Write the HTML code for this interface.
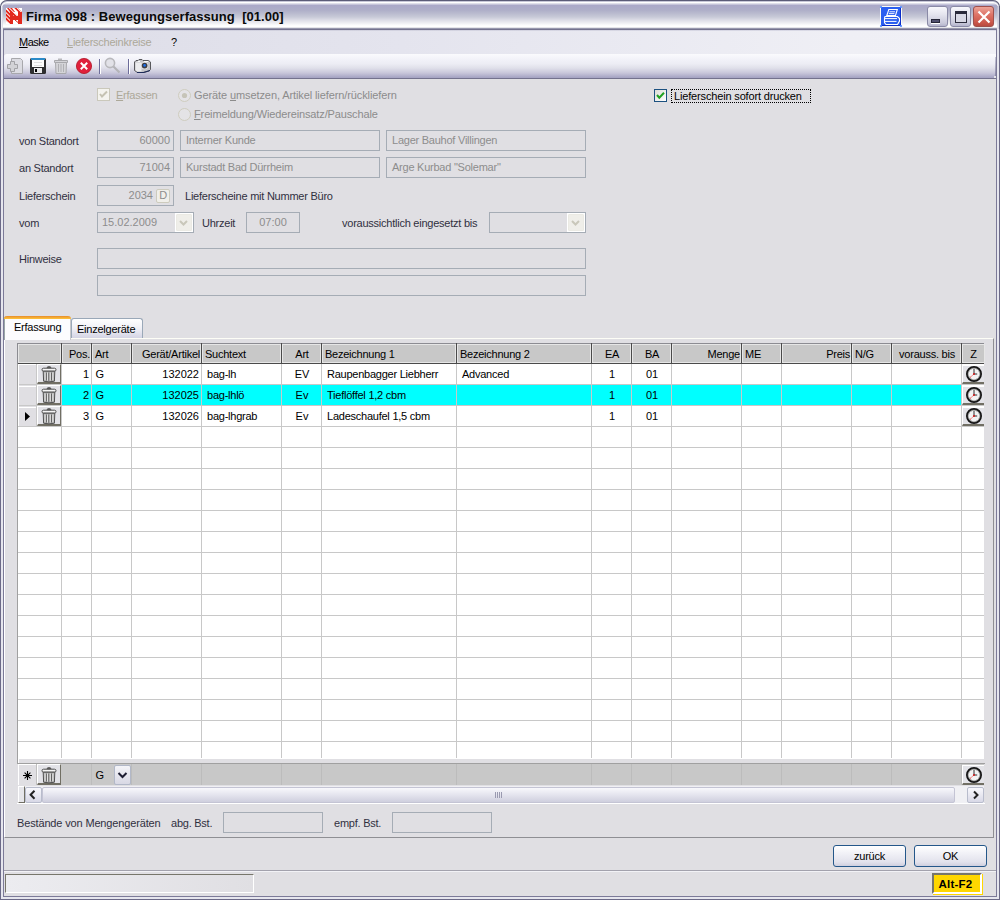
<!DOCTYPE html>
<html><head><meta charset="utf-8">
<style>
*{margin:0;padding:0;box-sizing:border-box}
html,body{width:1000px;height:900px;overflow:hidden;background:#fff}
body{font-family:"Liberation Sans",sans-serif;font-size:11px;color:#000;position:relative}
.a{position:absolute}
.t{position:absolute;white-space:nowrap;line-height:13px;letter-spacing:-0.24px}
.dis{color:#aca899}
.gry{color:#8d8d8d}
.box{position:absolute;border:1px solid #a5acb5;background:#e0dfe3}
.ul{text-decoration:underline;text-underline-offset:1px}
svg{position:absolute;overflow:visible}
</style></head><body>

<div class="a" style="left:0px;top:0px;width:1000px;height:900px;border-radius:7px 7px 0 0;background:#e0dfe3"></div>
<div class="a" style="left:0px;top:24px;width:1px;height:876px;background:#6c6a88"></div>
<div class="a" style="left:999px;top:24px;width:1px;height:876px;background:#6c6a88"></div>
<div class="a" style="left:1px;top:24px;width:2px;height:875px;background:#e6e6ee"></div>
<div class="a" style="left:997px;top:24px;width:2px;height:875px;background:#e6e6ee"></div>
<div class="a" style="left:3px;top:29px;width:1px;height:868px;background:#7c7a98"></div>
<div class="a" style="left:996px;top:29px;width:1px;height:868px;background:#7c7a98"></div>
<div class="a" style="left:0px;top:899px;width:1000px;height:1px;background:#6c6a88"></div>
<div class="a" style="left:1px;top:897px;width:998px;height:2px;background:#e6e6ee"></div>
<div class="a" style="left:3px;top:896px;width:994px;height:1px;background:#7c7a98"></div>
<div class="a" style="left:0px;top:0px;width:1000px;height:29px;border-radius:7px 7px 0 0;background:#5c5c78"></div>
<div class="a" style="left:1px;top:1px;width:998px;height:28px;border-radius:6px 6px 0 0;background:#c8c8d8"></div>
<div class="a" style="left:1px;top:2px;width:998px;height:27px;border-radius:6px 6px 0 0;background:#ffffff"></div>
<div class="a" style="left:2px;top:3px;width:996px;height:26px;border-radius:5px 5px 0 0;background:linear-gradient(#e0e0ea 0px,#e0e0ea 1px,#c6c4da 1px,#c6c4da 2px,#aaa8c8 2px,#aeaec8 7px,#bcbdd0 11px,#c8cad8 14px,#dcdce6 17px,#eeeef2 20px,#fbfbfc 22px,#ffffff 23px,#ffffff 24px,#e6e6ea 24px,#e6e6ea 25px,#9898ae 25px,#9898ae 26px)"></div>
<div class="a" style="left:0px;top:6px;width:1px;height:23px;background:#5c5c78"></div>
<div class="a" style="left:999px;top:6px;width:1px;height:23px;background:#5c5c78"></div>
<div class="a" style="left:1px;top:6px;width:1px;height:23px;background:#f0f0f6"></div>
<div class="a" style="left:998px;top:6px;width:1px;height:23px;background:#d0d0de"></div>
<div class="a" style="left:2px;top:6px;width:1px;height:23px;background:linear-gradient(#c8c8d8,#e6e6ee)"></div>
<div class="a" style="left:997px;top:6px;width:1px;height:23px;background:linear-gradient(#b8b8cc,#e0e0ea)"></div>
<div class="t" style="left:26px;top:9px;font-size:13px;font-weight:bold;line-height:16px;letter-spacing:0.05px;color:#0a0a0a">Firma 098 : Bewegungserfassung&nbsp; [01.00]</div>
<svg style="left:6px;top:8px" width="16" height="16" viewBox="0 0 16 16">
<defs><pattern id="hx" width="2.8" height="2.8" patternUnits="userSpaceOnUse" patternTransform="rotate(-45)"><rect width="1.9" height="2.8" fill="#e4261c"/></pattern></defs>
<rect x="0" y="0" width="16" height="16" fill="#fff"/>
<path d="M0 1 L4 4 V16 L0 13 Z" fill="url(#hx)"/>
<path d="M1 0 H6 L9 4 H4 Z" fill="url(#hx)"/>
<path d="M8 0 H12 L16 4 H12 Z" fill="url(#hx)"/>
<path d="M7 4 L12 8 H7 Z" fill="url(#hx)"/>
<path d="M4 4 H7 V8 H12 V4 H16 V16 H12 V12 H7 V16 H4 Z" fill="#e2291e"/>
<path d="M9 12 L12 14.5" stroke="#e2291e" stroke-width="1"/>
</svg>
<svg style="left:880px;top:6px" width="22" height="21" viewBox="0 0 22 21">
<rect x="0.5" y="0.5" width="21" height="20" fill="#2b5ff0" stroke="#fbfbf4" stroke-width="1"/>
<path d="M20.5 1.5 V19.5 H1.5" fill="none" stroke="#0a2cc8" stroke-width="1"/>
<circle cx="1" cy="1" r="1.1" fill="#4f86ff"/><circle cx="21" cy="1" r="1.1" fill="#4f86ff"/><circle cx="1" cy="20" r="1.1" fill="#4f86ff"/><circle cx="21" cy="20" r="1.1" fill="#4f86ff"/>
<path d="M8.8 3.5 H17.3 L15.5 9.5 H6.8 Z" fill="none" stroke="#fff" stroke-width="1.1"/>
<path d="M9.5 5.8 H15 M8.8 7.6 H14.4" stroke="#fff" stroke-width="0.9"/>
<path d="M5 10.5 H17.5 L19.5 12.5 V15 L17.5 18.5 H6 L4.5 16.5 V12 Z" fill="none" stroke="#fff" stroke-width="1.1"/>
<path d="M5 12.6 H17 M5 15.4 H16.5" stroke="#fff" stroke-width="1"/>
</svg>
<div class="a" style="left:927px;top:6px;width:21px;height:21px;border:1px solid #8a8aa6;border-radius:3px;background:linear-gradient(#f8f8fc,#e4e4ee 40%,#c8c8da 85%,#b4b4cc)"><div class="a" style="left:3px;top:12px;width:9px;height:4px;background:#50506e;border:1px solid #262638;box-shadow:0 1px 0 #fff"></div></div>
<div class="a" style="left:950px;top:6px;width:21px;height:21px;border:1px solid #8a8aa6;border-radius:3px;background:linear-gradient(#f8f8fc,#e4e4ee 40%,#c8c8da 85%,#b4b4cc)"><div class="a" style="left:4px;top:4px;width:12px;height:12px;border:1px solid #2a2a3a;border-top-width:3px;background:#d8d8e4"></div></div>
<div class="a" style="left:973px;top:6px;width:21px;height:21px;border:1px solid #a0504c;border-radius:3px;background:linear-gradient(#eca498,#de7468 40%,#c85448 85%,#b84a40)"><svg style="left:3px;top:3px" width="14" height="14"><path d="M1.5 1.5 L12.5 12.5 M12.5 1.5 L1.5 12.5" stroke="#fff" stroke-width="2.2"/></svg></div>
<div class="a" style="left:4px;top:29px;width:992px;height:1px;background:#74728e"></div>
<div class="a" style="left:4px;top:30px;width:992px;height:1px;background:linear-gradient(90deg,#cdcddb,#dcdce8)"></div>
<div class="a" style="left:4px;top:31px;width:992px;height:23px;background:linear-gradient(90deg,#dddde7,#e4e4ee 40%,#efeff5 85%,#f0f0f6)"></div>
<div class="t" style="left:19px;top:36px;letter-spacing:-0.55px"><span class="ul">M</span>aske</div>
<div class="t" style="left:67px;top:36px;color:#aca899"><span class="ul">L</span>ieferscheinkreise</div>
<div class="t" style="left:171px;top:36px;">?</div>
<div class="a" style="left:4px;top:54px;width:992px;height:24px;border-radius:3px 0 0 0;background:linear-gradient(#fafafd 0px,#f4f4fa 4px,#ececf4 10px,#e0e0ea 14px,#c8c6da 19px,#aaa8c6 23px,#a4a2c2 24px)"></div>
<div class="a" style="left:4px;top:78px;width:992px;height:1px;background:#74728e"></div>
<div class="a" style="left:995px;top:57px;width:1px;height:20px;background:linear-gradient(#c8c8d8,#8886a6)"></div>
<div class="a" style="left:994px;top:76px;width:2px;height:2px;background:#e3e3ea"></div>
<svg style="left:4px;top:55px" width="160" height="22" viewBox="4 55 160 22">
<!-- new doc disabled -->
<path d="M11.5 58.5 H20.5 L22.5 60.5 V73.5 H11.5 Z" fill="#dcdce2" stroke="#a8a8ac" stroke-width="1"/>
<path d="M10.5 61.5 H14.5 V64.5 H17.5 V68.5 H14.5 V71.5 H10.5 V68.5 H7.5 V64.5 H10.5 Z" fill="#d2d2d6" stroke="#a2a2a6" stroke-width="1"/>
<!-- save -->
<rect x="30" y="58" width="16" height="16" rx="1.5" fill="#2e2e30"/>
<rect x="31" y="58" width="14" height="2" fill="#2a8ac8"/>
<rect x="32" y="60" width="12" height="7" fill="#fbfbfb"/>
<path d="M34 62.5 H42 M34 65.5 H42" stroke="#d8d8d8" stroke-width="0.8"/>
<rect x="34" y="68" width="8" height="5" fill="#e8e8ea"/>
<rect x="35" y="69" width="2" height="3" fill="#000"/>
<!-- trash disabled -->
<path d="M58 58.5 H62 V60 H58 Z" fill="#b8b8bc"/>
<path d="M54.5 60.5 H67.5 V62.5 H54.5 Z" fill="#d4d4d8" stroke="#a8a8ac"/>
<path d="M55.5 62.5 H66.5 L66 73.5 H56 Z" fill="#d4d4d8" stroke="#a8a8ac"/>
<path d="M58.5 64 V72 M61 64 V72 M63.5 64 V72" stroke="#b0b0b4" stroke-width="1"/>
<!-- red x -->
<circle cx="84" cy="66" r="7.6" fill="#e0203c" stroke="#b01424" stroke-width="0.8"/>
<path d="M80.8 62.8 L87.2 69.2 M87.2 62.8 L80.8 69.2" stroke="#fff" stroke-width="2"/>
<!-- sep -->
<rect x="99" y="59" width="1" height="15" fill="#6c6c9a"/>
<rect x="100" y="59" width="1" height="15" fill="#fff"/>
<!-- magnifier disabled -->
<circle cx="110" cy="63" r="4.6" fill="#e2e2e8" stroke="#b8b8bc" stroke-width="1.6"/>
<path d="M113.5 66.5 L119.5 72.5" stroke="#b4b4b8" stroke-width="2.2"/>
<rect x="128" y="59" width="1" height="15" fill="#6c6c9a"/>
<rect x="129" y="59" width="1" height="15" fill="#fff"/>
<!-- camera -->
<path d="M134.5 62 L136 60.5 H138 L139 59.5 H142 L143 60.5 H148.5 L150.5 62 V69.5 L149 71 L143.5 72.5 H137.5 L134.5 70.5 Z" fill="#c4c4c8" stroke="#58585c" stroke-width="1"/>
<path d="M135.5 62.5 H141.5 V71.5 H137 L135.5 70 Z" fill="#ececee"/>
<path d="M137.5 61.5 H140 M144 61.5 H148" stroke="#fafafa" stroke-width="1"/>
<circle cx="144.6" cy="65.6" r="3.6" fill="#e8e8ea"/>
<circle cx="144.6" cy="65.6" r="2.9" fill="#3e3e42"/>
<circle cx="144.6" cy="65.4" r="1.3" fill="#1c70f0"/>
<path d="M137 72.5 H143.5 L150 70.5" fill="none" stroke="#1e2c5a" stroke-width="1.2"/>
</svg>
<div class="a" style="left:97px;top:88px;width:13px;height:13px;border:1px solid #cac8bb;background:#f4f3ee"></div>
<svg style="left:97px;top:88px" width="13" height="13"><path d="M3 6 L5 8.5 L10 3.5" fill="none" stroke="#c5c2b2" stroke-width="2"/></svg>
<div class="t" style="left:116px;top:89px;color:#aca899"><span class="ul">E</span>rfassen</div>
<svg style="left:178px;top:89.0px" width="13" height="13"><circle cx="6.5" cy="6.5" r="6" fill="#e4e3e6" stroke="#cfcdbf" stroke-width="1"/></svg>
<svg style="left:178px;top:108.0px" width="13" height="13"><circle cx="6.5" cy="6.5" r="6" fill="#e4e3e6" stroke="#cfcdbf" stroke-width="1"/></svg>
<svg style="left:178px;top:89px" width="13" height="13"><circle cx="6.5" cy="6.5" r="2.6" fill="#c6c4b8"/></svg>
<div class="t" style="left:194px;top:89px;color:#8c8c8c;letter-spacing:-0.1px">Geräte <span class="ul">u</span>msetzen, Artikel liefern/rückliefern</div>
<div class="t" style="left:194px;top:108px;color:#8c8c8c;letter-spacing:-0.13px"><span class="ul">F</span>reimeldung/Wiedereinsatz/Pauschale</div>
<div class="a" style="left:654px;top:89px;width:13px;height:13px;border:1px solid #1c5180;background:linear-gradient(135deg,#dcdcd7,#fff)"></div>
<svg style="left:654px;top:89px" width="13" height="13"><path d="M3 6 L5.3 8.7 L10 3.8" fill="none" stroke="#21a121" stroke-width="2"/></svg>
<div class="a" style="left:671px;top:89px;width:140px;height:14px;border:1px dotted #000"></div>
<div class="t" style="left:674px;top:90px;letter-spacing:-0.16px">Lieferschein sofort drucken</div>
<div class="t" style="left:19px;top:135px;color:#30303f">von Standort</div>
<div class="t" style="left:19px;top:162px;color:#30303f">an Standort</div>
<div class="t" style="left:19px;top:190px;color:#30303f">Lieferschein</div>
<div class="t" style="left:19px;top:217px;color:#30303f">vom</div>
<div class="t" style="left:19px;top:253px;color:#30303f">Hinweise</div>
<div class="a" style="left:97px;top:130px;width:77px;height:21px;border:1px solid #a5acb5;background:#e0dfe3"></div>
<div class="t" style="left:97px;top:134px;color:#8d8d8d;letter-spacing:0;width:73px;text-align:right">60000</div>
<div class="a" style="left:180px;top:130px;width:200px;height:21px;border:1px solid #a5acb5;background:#e0dfe3"></div>
<div class="t" style="left:186px;top:134px;color:#8d8d8d">Interner Kunde</div>
<div class="a" style="left:386px;top:130px;width:200px;height:21px;border:1px solid #a5acb5;background:#e0dfe3"></div>
<div class="t" style="left:392px;top:134px;color:#8d8d8d">Lager Bauhof Villingen</div>
<div class="a" style="left:97px;top:157px;width:77px;height:21px;border:1px solid #a5acb5;background:#e0dfe3"></div>
<div class="t" style="left:97px;top:161px;color:#8d8d8d;letter-spacing:0;width:73px;text-align:right">71004</div>
<div class="a" style="left:180px;top:157px;width:200px;height:21px;border:1px solid #a5acb5;background:#e0dfe3"></div>
<div class="t" style="left:186px;top:161px;color:#8d8d8d">Kurstadt Bad Dürrheim</div>
<div class="a" style="left:386px;top:157px;width:200px;height:21px;border:1px solid #a5acb5;background:#e0dfe3"></div>
<div class="t" style="left:392px;top:161px;color:#8d8d8d">Arge Kurbad "Solemar"</div>
<div class="a" style="left:97px;top:185px;width:77px;height:21px;border:1px solid #a5acb5;background:#e0dfe3"></div>
<div class="t" style="left:97px;top:189px;color:#8d8d8d;letter-spacing:0;width:56px;text-align:right">2034</div>
<div class="a" style="left:156px;top:189px;width:14px;height:14px;border:1px solid #cdcbbd;border-radius:2px;background:#f0efea"></div>
<div class="t" style="left:156px;top:189px;color:#8d8d8d;width:14px;text-align:center">D</div>
<div class="t" style="left:185px;top:190px;color:#30303f">Lieferscheine mit Nummer Büro</div>
<div class="a" style="left:97px;top:212px;width:97px;height:21px;border:1px solid #a5acb5;background:#e0dfe3"></div>
<div class="t" style="left:102px;top:216px;color:#8d8d8d;letter-spacing:0">15.02.2009</div>
<div class="a" style="left:175px;top:213px;width:18px;height:19px;background:#fff"></div>
<div class="a" style="left:176px;top:214px;width:16px;height:17px;border:1px solid #ebeae4;border-radius:1px;background:#efeee9"></div>
<svg style="left:175px;top:214px" width="17" height="17"><path d="M5 7 L8.5 10.5 L12 7" fill="none" stroke="#c9c7ba" stroke-width="2"/></svg>
<div class="t" style="left:202px;top:217px;color:#30303f">Uhrzeit</div>
<div class="a" style="left:246px;top:212px;width:54px;height:21px;border:1px solid #a5acb5;background:#e0dfe3"></div>
<div class="t" style="left:246px;top:216px;color:#8d8d8d;letter-spacing:0;width:54px;text-align:center">07:00</div>
<div class="t" style="left:342px;top:217px;color:#30303f">voraussichtlich eingesetzt bis</div>
<div class="a" style="left:489px;top:212px;width:97px;height:21px;border:1px solid #a5acb5;background:#e0dfe3"></div>
<div class="a" style="left:567px;top:213px;width:18px;height:19px;background:#fff"></div>
<div class="a" style="left:568px;top:214px;width:16px;height:17px;border:1px solid #ebeae4;border-radius:1px;background:#efeee9"></div>
<svg style="left:567px;top:214px" width="17" height="17"><path d="M5 7 L8.5 10.5 L12 7" fill="none" stroke="#c9c7ba" stroke-width="2"/></svg>
<div class="a" style="left:97px;top:248px;width:489px;height:21px;border:1px solid #a5acb5;background:#e0dfe3"></div>
<div class="a" style="left:97px;top:275px;width:489px;height:21px;border:1px solid #a5acb5;background:#e0dfe3"></div>
<div class="a" style="left:4px;top:338px;width:990px;height:500px;background:#e0dfe3;border-top:1px solid #fdfdf6;border-left:1px solid #fff;border-right:1px solid #8f8f94;border-bottom:1px solid #8f8f94"></div>
<div class="a" style="left:71px;top:318px;width:72px;height:20px;border:1px solid #9aa8b8;border-bottom:none;border-radius:3px 3px 0 0;background:linear-gradient(#ffffff,#f0f0f6 50%,#d4d4e4)"></div>
<div class="t" style="left:77px;top:323px;">Einzelgeräte</div>
<div class="a" style="left:4px;top:316px;width:67px;height:24px;border-left:1px solid #9aa8a8;border-right:1px solid #c8c8cc;border-radius:3px 3px 0 0;background:#fcfcfe"></div>
<div class="a" style="left:4px;top:316px;width:67px;height:3px;border-radius:3px 3px 0 0;background:linear-gradient(#e68b2c,#ffc73c)"></div>
<div class="t" style="left:14px;top:321px;">Erfassung</div>
<div class="a" style="left:18px;top:343px;width:966px;height:21px;background:#c8c8c8"></div>
<div class="a" style="left:17px;top:343px;width:967px;height:1px;background:#8c8c92"></div>
<div class="a" style="left:17px;top:363px;width:967px;height:1px;background:#4a4a4a"></div>
<div class="a" style="left:18px;top:364px;width:966px;height:395px;background:#fff"></div>
<div class="a" style="left:18px;top:364px;width:43px;height:62px;background:#e0dfe3"></div>
<div class="a" style="left:18px;top:384px;width:966px;height:1px;background:#c8c8c8"></div>
<div class="a" style="left:18px;top:405px;width:966px;height:1px;background:#c8c8c8"></div>
<div class="a" style="left:18px;top:426px;width:966px;height:1px;background:#c8c8c8"></div>
<div class="a" style="left:18px;top:447px;width:966px;height:1px;background:#c8c8c8"></div>
<div class="a" style="left:18px;top:468px;width:966px;height:1px;background:#c8c8c8"></div>
<div class="a" style="left:18px;top:489px;width:966px;height:1px;background:#c8c8c8"></div>
<div class="a" style="left:18px;top:510px;width:966px;height:1px;background:#c8c8c8"></div>
<div class="a" style="left:18px;top:531px;width:966px;height:1px;background:#c8c8c8"></div>
<div class="a" style="left:18px;top:552px;width:966px;height:1px;background:#c8c8c8"></div>
<div class="a" style="left:18px;top:573px;width:966px;height:1px;background:#c8c8c8"></div>
<div class="a" style="left:18px;top:594px;width:966px;height:1px;background:#c8c8c8"></div>
<div class="a" style="left:18px;top:615px;width:966px;height:1px;background:#c8c8c8"></div>
<div class="a" style="left:18px;top:636px;width:966px;height:1px;background:#c8c8c8"></div>
<div class="a" style="left:18px;top:657px;width:966px;height:1px;background:#c8c8c8"></div>
<div class="a" style="left:18px;top:678px;width:966px;height:1px;background:#c8c8c8"></div>
<div class="a" style="left:18px;top:699px;width:966px;height:1px;background:#c8c8c8"></div>
<div class="a" style="left:18px;top:720px;width:966px;height:1px;background:#c8c8c8"></div>
<div class="a" style="left:18px;top:741px;width:966px;height:1px;background:#c8c8c8"></div>
<div class="a" style="left:62px;top:385px;width:899px;height:20px;background:#00ffff"></div>
<div class="a" style="left:61px;top:364px;width:1px;height:394px;background:#c8c8c8"></div>
<div class="a" style="left:91px;top:364px;width:1px;height:394px;background:#c8c8c8"></div>
<div class="a" style="left:131px;top:364px;width:1px;height:394px;background:#c8c8c8"></div>
<div class="a" style="left:201px;top:364px;width:1px;height:394px;background:#c8c8c8"></div>
<div class="a" style="left:281px;top:364px;width:1px;height:394px;background:#c8c8c8"></div>
<div class="a" style="left:321px;top:364px;width:1px;height:394px;background:#c8c8c8"></div>
<div class="a" style="left:456px;top:364px;width:1px;height:394px;background:#c8c8c8"></div>
<div class="a" style="left:591px;top:364px;width:1px;height:394px;background:#c8c8c8"></div>
<div class="a" style="left:631px;top:364px;width:1px;height:394px;background:#c8c8c8"></div>
<div class="a" style="left:671px;top:364px;width:1px;height:394px;background:#c8c8c8"></div>
<div class="a" style="left:741px;top:364px;width:1px;height:394px;background:#c8c8c8"></div>
<div class="a" style="left:781px;top:364px;width:1px;height:394px;background:#c8c8c8"></div>
<div class="a" style="left:851px;top:364px;width:1px;height:394px;background:#c8c8c8"></div>
<div class="a" style="left:891px;top:364px;width:1px;height:394px;background:#c8c8c8"></div>
<div class="a" style="left:961px;top:364px;width:1px;height:394px;background:#c8c8c8"></div>
<div class="a" style="left:36px;top:364px;width:1px;height:62px;background:#c8c8c8"></div>
<div class="a" style="left:18px;top:364px;width:18px;height:1px;background:#fff"></div>
<div class="a" style="left:18px;top:386px;width:18px;height:1px;background:#fff"></div>
<div class="a" style="left:18px;top:407px;width:18px;height:1px;background:#fff"></div>
<div class="a" style="left:18px;top:364px;width:1px;height:62px;background:#fff"></div>
<div class="a" style="left:18px;top:344px;width:43px;height:19px;border:1px solid #e6e6e6"></div>
<div class="a" style="left:62px;top:344px;width:29px;height:19px;border:1px solid #e6e6e6"></div>
<div class="a" style="left:92px;top:344px;width:39px;height:19px;border:1px solid #e6e6e6"></div>
<div class="a" style="left:132px;top:344px;width:69px;height:19px;border:1px solid #e6e6e6"></div>
<div class="a" style="left:202px;top:344px;width:79px;height:19px;border:1px solid #e6e6e6"></div>
<div class="a" style="left:282px;top:344px;width:39px;height:19px;border:1px solid #e6e6e6"></div>
<div class="a" style="left:322px;top:344px;width:134px;height:19px;border:1px solid #e6e6e6"></div>
<div class="a" style="left:457px;top:344px;width:134px;height:19px;border:1px solid #e6e6e6"></div>
<div class="a" style="left:592px;top:344px;width:39px;height:19px;border:1px solid #e6e6e6"></div>
<div class="a" style="left:632px;top:344px;width:39px;height:19px;border:1px solid #e6e6e6"></div>
<div class="a" style="left:672px;top:344px;width:69px;height:19px;border:1px solid #e6e6e6"></div>
<div class="a" style="left:742px;top:344px;width:39px;height:19px;border:1px solid #e6e6e6"></div>
<div class="a" style="left:782px;top:344px;width:69px;height:19px;border:1px solid #e6e6e6"></div>
<div class="a" style="left:852px;top:344px;width:39px;height:19px;border:1px solid #e6e6e6"></div>
<div class="a" style="left:892px;top:344px;width:69px;height:19px;border:1px solid #e6e6e6"></div>
<div class="a" style="left:962px;top:344px;width:23px;height:19px;border:1px solid #e6e6e6"></div>
<div class="a" style="left:61px;top:343px;width:1px;height:21px;background:#4a4a4a"></div>
<div class="a" style="left:91px;top:343px;width:1px;height:21px;background:#4a4a4a"></div>
<div class="a" style="left:131px;top:343px;width:1px;height:21px;background:#4a4a4a"></div>
<div class="a" style="left:201px;top:343px;width:1px;height:21px;background:#4a4a4a"></div>
<div class="a" style="left:281px;top:343px;width:1px;height:21px;background:#4a4a4a"></div>
<div class="a" style="left:321px;top:343px;width:1px;height:21px;background:#4a4a4a"></div>
<div class="a" style="left:456px;top:343px;width:1px;height:21px;background:#4a4a4a"></div>
<div class="a" style="left:591px;top:343px;width:1px;height:21px;background:#4a4a4a"></div>
<div class="a" style="left:631px;top:343px;width:1px;height:21px;background:#4a4a4a"></div>
<div class="a" style="left:671px;top:343px;width:1px;height:21px;background:#4a4a4a"></div>
<div class="a" style="left:741px;top:343px;width:1px;height:21px;background:#4a4a4a"></div>
<div class="a" style="left:781px;top:343px;width:1px;height:21px;background:#4a4a4a"></div>
<div class="a" style="left:851px;top:343px;width:1px;height:21px;background:#4a4a4a"></div>
<div class="a" style="left:891px;top:343px;width:1px;height:21px;background:#4a4a4a"></div>
<div class="a" style="left:961px;top:343px;width:1px;height:21px;background:#4a4a4a"></div>
<div class="a" style="left:17px;top:343px;width:1px;height:21px;background:#8c8c92"></div>
<div class="a" style="left:17px;top:364px;width:1px;height:399px;background:#a0a0a0"></div>
<div class="t" style="left:62px;top:348px;width:28px;text-align:right">Pos.</div>
<div class="t" style="left:95px;top:348px;">Art</div>
<div class="t" style="left:132px;top:348px;width:68px;text-align:right">Gerät/Artikel</div>
<div class="t" style="left:205px;top:348px;">Suchtext</div>
<div class="t" style="left:282px;top:348px;width:40px;text-align:center">Art</div>
<div class="t" style="left:325px;top:348px;">Bezeichnung 1</div>
<div class="t" style="left:460px;top:348px;">Bezeichnung 2</div>
<div class="t" style="left:592px;top:348px;width:40px;text-align:center">EA</div>
<div class="t" style="left:632px;top:348px;width:40px;text-align:center">BA</div>
<div class="t" style="left:672px;top:348px;width:68px;text-align:right">Menge</div>
<div class="t" style="left:745px;top:348px;">ME</div>
<div class="t" style="left:782px;top:348px;width:68px;text-align:right">Preis</div>
<div class="t" style="left:855px;top:348px;">N/G</div>
<div class="t" style="left:892px;top:348px;width:70px;text-align:center">vorauss. bis</div>
<div class="t" style="left:962px;top:348px;width:23px;text-align:center">Z</div>
<div class="t" style="left:62px;top:368px;width:27px;text-align:right;letter-spacing:0">1</div>
<div class="t" style="left:95.5px;top:368px;">G</div>
<div class="t" style="left:132px;top:368px;width:67px;text-align:right;letter-spacing:0">132022</div>
<div class="t" style="left:207px;top:368px;">bag-lh</div>
<div class="t" style="left:282px;top:368px;width:40px;text-align:center;letter-spacing:0">EV</div>
<div class="t" style="left:327px;top:368px;">Raupenbagger Liebherr</div>
<div class="t" style="left:462px;top:368px;">Advanced</div>
<div class="t" style="left:592px;top:368px;width:40px;text-align:center;letter-spacing:0">1</div>
<div class="t" style="left:632px;top:368px;width:40px;text-align:center;letter-spacing:0">01</div>
<div class="t" style="left:62px;top:389px;width:27px;text-align:right;letter-spacing:0">2</div>
<div class="t" style="left:95.5px;top:389px;">G</div>
<div class="t" style="left:132px;top:389px;width:67px;text-align:right;letter-spacing:0">132025</div>
<div class="t" style="left:207px;top:389px;">bag-lhlö</div>
<div class="t" style="left:282px;top:389px;width:40px;text-align:center;letter-spacing:0">Ev</div>
<div class="t" style="left:327px;top:389px;">Tieflöffel 1,2 cbm</div>
<div class="t" style="left:462px;top:389px;"></div>
<div class="t" style="left:592px;top:389px;width:40px;text-align:center;letter-spacing:0">1</div>
<div class="t" style="left:632px;top:389px;width:40px;text-align:center;letter-spacing:0">01</div>
<div class="t" style="left:62px;top:410px;width:27px;text-align:right;letter-spacing:0">3</div>
<div class="t" style="left:95.5px;top:410px;">G</div>
<div class="t" style="left:132px;top:410px;width:67px;text-align:right;letter-spacing:0">132026</div>
<div class="t" style="left:207px;top:410px;">bag-lhgrab</div>
<div class="t" style="left:282px;top:410px;width:40px;text-align:center;letter-spacing:0">Ev</div>
<div class="t" style="left:327px;top:410px;">Ladeschaufel 1,5 cbm</div>
<div class="t" style="left:462px;top:410px;"></div>
<div class="t" style="left:592px;top:410px;width:40px;text-align:center;letter-spacing:0">1</div>
<div class="t" style="left:632px;top:410px;width:40px;text-align:center;letter-spacing:0">01</div>
<div class="a" style="left:37px;top:364px;width:24px;height:20px;border-top:1px solid #fff;border-left:1px solid #fff;border-bottom:2px solid #716f64;background:#e3e3e8;border-right:1px solid #716f64"></div>
<svg style="left:41px;top:365px" width="16" height="18" viewBox="0 0 16 18">
<ellipse cx="8" cy="2.6" rx="2.2" ry="1.6" fill="#5e5e5e"/>
<rect x="1" y="3.2" width="14" height="3" rx="1.5" fill="#f4f4f4" stroke="#4e4e4e" stroke-width="1"/>
<path d="M2.2 6.2 H13.8 L13.4 16.2 Q8 17.6 2.6 16.2 Z" fill="#b4b4b4" stroke="#505050" stroke-width="1"/>
<path d="M5.3 7.5 V15.5 M7.8 7.5 V15.8 M10.6 7.5 V15.5" stroke="#5e5e5e" stroke-width="1.1"/>
<path d="M4.1 7.5 V15.3 M6.6 7.5 V15.5 M9.2 7.5 V15.5 M11.8 7.5 V15.3" stroke="#ececec" stroke-width="0.9"/>
</svg>
<div class="a" style="left:962px;top:365px;width:22px;height:19px;border-top:1px solid #fff;border-left:1px solid #fff;border-bottom:2px solid #716f64;background:#e3e3e8"></div>
<svg style="left:965px;top:365px" width="18" height="18" viewBox="0 0 18 18">
<circle cx="9" cy="9" r="7" fill="#f3f3f4" stroke="#141414" stroke-width="2"/>
<circle cx="9" cy="9" r="6" fill="none" stroke="#8a8a8a" stroke-width="0.5"/>
<circle cx="14.30" cy="9.00" r="0.45" fill="#9a9a9a"/><circle cx="13.59" cy="11.65" r="0.45" fill="#9a9a9a"/><circle cx="11.65" cy="13.59" r="0.45" fill="#9a9a9a"/><circle cx="9.00" cy="14.30" r="0.45" fill="#9a9a9a"/><circle cx="6.35" cy="13.59" r="0.45" fill="#9a9a9a"/><circle cx="4.41" cy="11.65" r="0.45" fill="#9a9a9a"/><circle cx="3.70" cy="9.00" r="0.45" fill="#9a9a9a"/><circle cx="4.41" cy="6.35" r="0.45" fill="#9a9a9a"/><circle cx="6.35" cy="4.41" r="0.45" fill="#9a9a9a"/><circle cx="9.00" cy="3.70" r="0.45" fill="#9a9a9a"/><circle cx="11.65" cy="4.41" r="0.45" fill="#9a9a9a"/><circle cx="13.59" cy="6.35" r="0.45" fill="#9a9a9a"/>
<path d="M9 3.8 V9 H12.2" fill="none" stroke="#1a1a1a" stroke-width="0.9"/>
<path d="M9 9 L5 12.6" stroke="#e83030" stroke-width="0.9" stroke-dasharray="1.4 0.6"/>
<circle cx="9" cy="9" r="1.05" fill="#d02020"/>
</svg>
<div class="a" style="left:37px;top:385px;width:24px;height:20px;border-top:1px solid #fff;border-left:1px solid #fff;border-bottom:2px solid #716f64;background:#e3e3e8;border-right:1px solid #716f64"></div>
<svg style="left:41px;top:386px" width="16" height="18" viewBox="0 0 16 18">
<ellipse cx="8" cy="2.6" rx="2.2" ry="1.6" fill="#5e5e5e"/>
<rect x="1" y="3.2" width="14" height="3" rx="1.5" fill="#f4f4f4" stroke="#4e4e4e" stroke-width="1"/>
<path d="M2.2 6.2 H13.8 L13.4 16.2 Q8 17.6 2.6 16.2 Z" fill="#b4b4b4" stroke="#505050" stroke-width="1"/>
<path d="M5.3 7.5 V15.5 M7.8 7.5 V15.8 M10.6 7.5 V15.5" stroke="#5e5e5e" stroke-width="1.1"/>
<path d="M4.1 7.5 V15.3 M6.6 7.5 V15.5 M9.2 7.5 V15.5 M11.8 7.5 V15.3" stroke="#ececec" stroke-width="0.9"/>
</svg>
<div class="a" style="left:962px;top:386px;width:22px;height:19px;border-top:1px solid #fff;border-left:1px solid #fff;border-bottom:2px solid #716f64;background:#e3e3e8"></div>
<svg style="left:965px;top:386px" width="18" height="18" viewBox="0 0 18 18">
<circle cx="9" cy="9" r="7" fill="#f3f3f4" stroke="#141414" stroke-width="2"/>
<circle cx="9" cy="9" r="6" fill="none" stroke="#8a8a8a" stroke-width="0.5"/>
<circle cx="14.30" cy="9.00" r="0.45" fill="#9a9a9a"/><circle cx="13.59" cy="11.65" r="0.45" fill="#9a9a9a"/><circle cx="11.65" cy="13.59" r="0.45" fill="#9a9a9a"/><circle cx="9.00" cy="14.30" r="0.45" fill="#9a9a9a"/><circle cx="6.35" cy="13.59" r="0.45" fill="#9a9a9a"/><circle cx="4.41" cy="11.65" r="0.45" fill="#9a9a9a"/><circle cx="3.70" cy="9.00" r="0.45" fill="#9a9a9a"/><circle cx="4.41" cy="6.35" r="0.45" fill="#9a9a9a"/><circle cx="6.35" cy="4.41" r="0.45" fill="#9a9a9a"/><circle cx="9.00" cy="3.70" r="0.45" fill="#9a9a9a"/><circle cx="11.65" cy="4.41" r="0.45" fill="#9a9a9a"/><circle cx="13.59" cy="6.35" r="0.45" fill="#9a9a9a"/>
<path d="M9 3.8 V9 H12.2" fill="none" stroke="#1a1a1a" stroke-width="0.9"/>
<path d="M9 9 L5 12.6" stroke="#e83030" stroke-width="0.9" stroke-dasharray="1.4 0.6"/>
<circle cx="9" cy="9" r="1.05" fill="#d02020"/>
</svg>
<div class="a" style="left:37px;top:406px;width:24px;height:20px;border-top:1px solid #fff;border-left:1px solid #fff;border-bottom:2px solid #716f64;background:#e3e3e8;border-right:1px solid #716f64"></div>
<svg style="left:41px;top:407px" width="16" height="18" viewBox="0 0 16 18">
<ellipse cx="8" cy="2.6" rx="2.2" ry="1.6" fill="#5e5e5e"/>
<rect x="1" y="3.2" width="14" height="3" rx="1.5" fill="#f4f4f4" stroke="#4e4e4e" stroke-width="1"/>
<path d="M2.2 6.2 H13.8 L13.4 16.2 Q8 17.6 2.6 16.2 Z" fill="#b4b4b4" stroke="#505050" stroke-width="1"/>
<path d="M5.3 7.5 V15.5 M7.8 7.5 V15.8 M10.6 7.5 V15.5" stroke="#5e5e5e" stroke-width="1.1"/>
<path d="M4.1 7.5 V15.3 M6.6 7.5 V15.5 M9.2 7.5 V15.5 M11.8 7.5 V15.3" stroke="#ececec" stroke-width="0.9"/>
</svg>
<div class="a" style="left:962px;top:407px;width:22px;height:19px;border-top:1px solid #fff;border-left:1px solid #fff;border-bottom:2px solid #716f64;background:#e3e3e8"></div>
<svg style="left:965px;top:407px" width="18" height="18" viewBox="0 0 18 18">
<circle cx="9" cy="9" r="7" fill="#f3f3f4" stroke="#141414" stroke-width="2"/>
<circle cx="9" cy="9" r="6" fill="none" stroke="#8a8a8a" stroke-width="0.5"/>
<circle cx="14.30" cy="9.00" r="0.45" fill="#9a9a9a"/><circle cx="13.59" cy="11.65" r="0.45" fill="#9a9a9a"/><circle cx="11.65" cy="13.59" r="0.45" fill="#9a9a9a"/><circle cx="9.00" cy="14.30" r="0.45" fill="#9a9a9a"/><circle cx="6.35" cy="13.59" r="0.45" fill="#9a9a9a"/><circle cx="4.41" cy="11.65" r="0.45" fill="#9a9a9a"/><circle cx="3.70" cy="9.00" r="0.45" fill="#9a9a9a"/><circle cx="4.41" cy="6.35" r="0.45" fill="#9a9a9a"/><circle cx="6.35" cy="4.41" r="0.45" fill="#9a9a9a"/><circle cx="9.00" cy="3.70" r="0.45" fill="#9a9a9a"/><circle cx="11.65" cy="4.41" r="0.45" fill="#9a9a9a"/><circle cx="13.59" cy="6.35" r="0.45" fill="#9a9a9a"/>
<path d="M9 3.8 V9 H12.2" fill="none" stroke="#1a1a1a" stroke-width="0.9"/>
<path d="M9 9 L5 12.6" stroke="#e83030" stroke-width="0.9" stroke-dasharray="1.4 0.6"/>
<circle cx="9" cy="9" r="1.05" fill="#d02020"/>
</svg>
<svg style="left:25px;top:412px" width="6" height="10"><path d="M0 0 L5 4.5 L0 9 Z" fill="#000"/></svg>
<div class="a" style="left:18px;top:759px;width:966px;height:4px;background:#e0dfe3;border-left:1px solid #fff"></div>
<div class="a" style="left:17px;top:763px;width:968px;height:1px;background:#a0a0a0"></div>
<div class="a" style="left:18px;top:764px;width:966px;height:21px;background:#c8c8c8"></div>
<div class="a" style="left:18px;top:764px;width:19px;height:21px;background:#e2e1e5"></div>
<div class="a" style="left:91px;top:764px;width:1px;height:21px;background:#bcbcbc"></div>
<div class="a" style="left:131px;top:764px;width:1px;height:21px;background:#bcbcbc"></div>
<div class="a" style="left:201px;top:764px;width:1px;height:21px;background:#bcbcbc"></div>
<div class="a" style="left:281px;top:764px;width:1px;height:21px;background:#bcbcbc"></div>
<div class="a" style="left:321px;top:764px;width:1px;height:21px;background:#bcbcbc"></div>
<div class="a" style="left:456px;top:764px;width:1px;height:21px;background:#bcbcbc"></div>
<div class="a" style="left:591px;top:764px;width:1px;height:21px;background:#bcbcbc"></div>
<div class="a" style="left:631px;top:764px;width:1px;height:21px;background:#bcbcbc"></div>
<div class="a" style="left:671px;top:764px;width:1px;height:21px;background:#bcbcbc"></div>
<div class="a" style="left:741px;top:764px;width:1px;height:21px;background:#bcbcbc"></div>
<div class="a" style="left:781px;top:764px;width:1px;height:21px;background:#bcbcbc"></div>
<div class="a" style="left:851px;top:764px;width:1px;height:21px;background:#bcbcbc"></div>
<div class="a" style="left:891px;top:764px;width:1px;height:21px;background:#bcbcbc"></div>
<div class="a" style="left:961px;top:764px;width:1px;height:21px;background:#bcbcbc"></div>
<div class="a" style="left:18px;top:764px;width:18px;height:21px;border-top:1px solid #fff;border-left:1px solid #fff;background:#e0dfe3"></div>
<div class="a" style="left:36px;top:764px;width:1px;height:21px;background:#c0c0c0"></div>
<svg style="left:18px;top:764px" width="18" height="21" viewBox="18 764 18 21"><path d="M27.5 771 V780 M23 775.5 H32 M24.6 772.6 L30.4 778.4 M30.4 772.6 L24.6 778.4" stroke="#000" stroke-width="1.1"/><circle cx="27.5" cy="775.5" r="1.6" fill="#000"/></svg>
<div class="a" style="left:37px;top:764px;width:24px;height:21px;border-top:1px solid #fff;border-left:1px solid #fff;border-bottom:2px solid #716f64;background:#e3e3e8;border-right:1px solid #716f64"></div>
<svg style="left:41px;top:766px" width="16" height="18" viewBox="0 0 16 18">
<ellipse cx="8" cy="2.6" rx="2.2" ry="1.6" fill="#5e5e5e"/>
<rect x="1" y="3.2" width="14" height="3" rx="1.5" fill="#f4f4f4" stroke="#4e4e4e" stroke-width="1"/>
<path d="M2.2 6.2 H13.8 L13.4 16.2 Q8 17.6 2.6 16.2 Z" fill="#b4b4b4" stroke="#505050" stroke-width="1"/>
<path d="M5.3 7.5 V15.5 M7.8 7.5 V15.8 M10.6 7.5 V15.5" stroke="#5e5e5e" stroke-width="1.1"/>
<path d="M4.1 7.5 V15.3 M6.6 7.5 V15.5 M9.2 7.5 V15.5 M11.8 7.5 V15.3" stroke="#ececec" stroke-width="0.9"/>
</svg>
<div class="t" style="left:95.5px;top:769px;">G</div>
<div class="a" style="left:114px;top:765px;width:17px;height:20px;border:1px solid #b2b8c8;border-radius:2px;background:linear-gradient(#f4f4f8,#d8d8e4)"></div>
<svg style="left:114px;top:765px" width="17" height="20"><path d="M4.5 8 L8.5 12 L12.5 8" fill="none" stroke="#1e1e32" stroke-width="2"/></svg>
<div class="a" style="left:962px;top:765px;width:22px;height:20px;border-top:1px solid #fff;border-left:1px solid #fff;border-bottom:2px solid #716f64;background:#e3e3e8"></div>
<svg style="left:965px;top:766px" width="18" height="18" viewBox="0 0 18 18">
<circle cx="9" cy="9" r="7" fill="#f3f3f4" stroke="#141414" stroke-width="2"/>
<circle cx="9" cy="9" r="6" fill="none" stroke="#8a8a8a" stroke-width="0.5"/>
<circle cx="14.30" cy="9.00" r="0.45" fill="#9a9a9a"/><circle cx="13.59" cy="11.65" r="0.45" fill="#9a9a9a"/><circle cx="11.65" cy="13.59" r="0.45" fill="#9a9a9a"/><circle cx="9.00" cy="14.30" r="0.45" fill="#9a9a9a"/><circle cx="6.35" cy="13.59" r="0.45" fill="#9a9a9a"/><circle cx="4.41" cy="11.65" r="0.45" fill="#9a9a9a"/><circle cx="3.70" cy="9.00" r="0.45" fill="#9a9a9a"/><circle cx="4.41" cy="6.35" r="0.45" fill="#9a9a9a"/><circle cx="6.35" cy="4.41" r="0.45" fill="#9a9a9a"/><circle cx="9.00" cy="3.70" r="0.45" fill="#9a9a9a"/><circle cx="11.65" cy="4.41" r="0.45" fill="#9a9a9a"/><circle cx="13.59" cy="6.35" r="0.45" fill="#9a9a9a"/>
<path d="M9 3.8 V9 H12.2" fill="none" stroke="#1a1a1a" stroke-width="0.9"/>
<path d="M9 9 L5 12.6" stroke="#e83030" stroke-width="0.9" stroke-dasharray="1.4 0.6"/>
<circle cx="9" cy="9" r="1.05" fill="#d02020"/>
</svg>
<div class="a" style="left:18px;top:786px;width:966px;height:17px;background:#f0f0f4"></div>
<div class="a" style="left:18px;top:786px;width:7px;height:17px;border-top:1px solid #fff;border-left:1px solid #fff;border-right:1px solid #716f64;border-bottom:1px solid #716f64;background:#e6e6ea"></div>
<div class="a" style="left:25px;top:787px;width:17px;height:16px;border:1px solid #b8bccc;border-radius:2px;background:linear-gradient(#f8f8fc,#d8d8e6)"></div>
<svg style="left:25px;top:787px" width="17" height="16"><path d="M9.5 3.8 L5.6 7.8 L9.5 11.8" fill="none" stroke="#222" stroke-width="2"/></svg>
<div class="a" style="left:42px;top:787px;width:913px;height:16px;border:1px solid #c4c4d4;border-radius:2px;background:linear-gradient(#f8f8fc,#e4e4ee 50%,#cfcfde)"></div>
<svg style="left:494px;top:792px" width="9" height="6"><path d="M1.5 0 V6 M3.5 0 V6 M5.5 0 V6 M7.5 0 V6" stroke="#9a9ab0" stroke-width="1"/></svg>
<div class="a" style="left:967px;top:787px;width:17px;height:16px;border:1px solid #b8bccc;border-radius:2px;background:linear-gradient(#f8f8fc,#d8d8e6)"></div>
<svg style="left:967px;top:787px" width="17" height="16"><path d="M7 4.5 L10.5 8 L7 11.5" fill="none" stroke="#222" stroke-width="2"/></svg>
<div class="a" style="left:17px;top:803px;width:968px;height:1px;background:#fff"></div>
<div class="t" style="left:17px;top:817px;color:#30303f;letter-spacing:-0.15px">Bestände von Mengengeräten</div>
<div class="t" style="left:171px;top:817px;color:#30303f">abg. Bst.</div>
<div class="a" style="left:223px;top:812px;width:100px;height:21px;border:1px solid #a5acb5;background:#e0dfe3"></div>
<div class="t" style="left:334px;top:817px;color:#30303f">empf. Bst.</div>
<div class="a" style="left:392px;top:812px;width:100px;height:21px;border:1px solid #a5acb5;background:#e0dfe3"></div>
<div class="a" style="left:833px;top:845px;width:73px;height:22px;border:1px solid #24578a;border-radius:3px;background:linear-gradient(#ffffff,#f0f0f6 40%,#e2e2ec 80%,#cfcfde)"></div>
<div class="t" style="left:833px;top:850px;width:73px;text-align:center">zurück</div>
<div class="a" style="left:914px;top:845px;width:73px;height:22px;border:1px solid #24578a;border-radius:3px;background:linear-gradient(#ffffff,#f0f0f6 40%,#e2e2ec 80%,#cfcfde)"></div>
<div class="t" style="left:914px;top:850px;width:73px;text-align:center">OK</div>
<div class="a" style="left:4px;top:870px;width:992px;height:1px;background:#a3a2ad"></div>
<div class="a" style="left:4px;top:871px;width:992px;height:1px;background:#f2f2f6"></div>
<div class="a" style="left:5px;top:874px;width:249px;height:19px;border-top:1px solid #77766b;border-left:1px solid #77766b;border-bottom:1px solid #fff;border-right:1px solid #fff;background:linear-gradient(90deg,#ececf0,#e0dfe3)"></div>
<div class="a" style="left:932px;top:873px;width:50px;height:21px;border-top:2px solid #77766b;border-left:2px solid #77766b;border-bottom:2px solid #fff;border-right:2px solid #fff;background:#ffd700;box-shadow:1px 1px 0 #ffd700"></div>
<div class="t" style="left:938.5px;top:878px;font-weight:bold;font-size:11.5px;letter-spacing:0.2px">Alt-F2</div>
</body></html>
